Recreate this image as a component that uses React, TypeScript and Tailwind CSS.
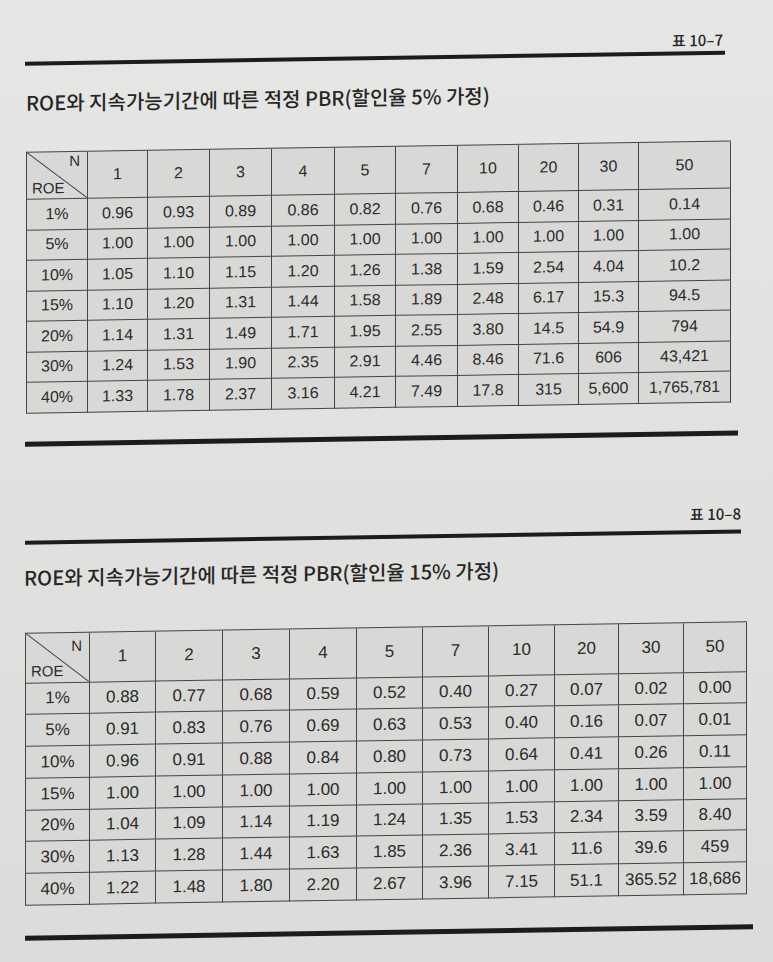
import React from 'react';

type TableSpec = {
  rows: [string, string[]][];
  gridClass: string;
  textClass: string;
  nClass: string;
  roeClass: string;
  marginClass: string;
};

const COLS = ['1', '2', '3', '4', '5', '7', '10', '20', '30', '50'];

// 표 10-7 : 할인율 5%
const TABLE_5: [string, string[]][] = [
  ['1%', ['0.96', '0.93', '0.89', '0.86', '0.82', '0.76', '0.68', '0.46', '0.31', '0.14']],
  ['5%', ['1.00', '1.00', '1.00', '1.00', '1.00', '1.00', '1.00', '1.00', '1.00', '1.00']],
  ['10%', ['1.05', '1.10', '1.15', '1.20', '1.26', '1.38', '1.59', '2.54', '4.04', '10.2']],
  ['15%', ['1.10', '1.20', '1.31', '1.44', '1.58', '1.89', '2.48', '6.17', '15.3', '94.5']],
  ['20%', ['1.14', '1.31', '1.49', '1.71', '1.95', '2.55', '3.80', '14.5', '54.9', '794']],
  ['30%', ['1.24', '1.53', '1.90', '2.35', '2.91', '4.46', '8.46', '71.6', '606', '43,421']],
  ['40%', ['1.33', '1.78', '2.37', '3.16', '4.21', '7.49', '17.8', '315', '5,600', '1,765,781']],
];

// 표 10-8 : 할인율 15%
const TABLE_15: [string, string[]][] = [
  ['1%', ['0.88', '0.77', '0.68', '0.59', '0.52', '0.40', '0.27', '0.07', '0.02', '0.00']],
  ['5%', ['0.91', '0.83', '0.76', '0.69', '0.63', '0.53', '0.40', '0.16', '0.07', '0.01']],
  ['10%', ['0.96', '0.91', '0.88', '0.84', '0.80', '0.73', '0.64', '0.41', '0.26', '0.11']],
  ['15%', ['1.00', '1.00', '1.00', '1.00', '1.00', '1.00', '1.00', '1.00', '1.00', '1.00']],
  ['20%', ['1.04', '1.09', '1.14', '1.19', '1.24', '1.35', '1.53', '2.34', '3.59', '8.40']],
  ['30%', ['1.13', '1.28', '1.44', '1.63', '1.85', '2.36', '3.41', '11.6', '39.6', '459']],
  ['40%', ['1.22', '1.48', '1.80', '2.20', '2.67', '3.96', '7.15', '51.1', '365.52', '18,686']],
];

const cell = 'flex items-center justify-center border-r border-b border-[#454545]';

function PbrTable({ rows, gridClass, textClass, nClass, roeClass, marginClass }: TableSpec) {
  return (
    <div
      className={`grid self-start border-l border-t border-[#454545] bg-[#d8d8d6] text-[#2b2b2b] font-['Liberation_Sans',Arial,sans-serif] ${gridClass} ${textClass} ${marginClass}`}
    >
      <div className="relative border-r border-b border-[#454545]">
        <svg className="absolute inset-0 w-full h-full" preserveAspectRatio="none" viewBox="0 0 100 100">
          <line x1="0" y1="0" x2="100" y2="100" stroke="#454545" strokeWidth="1" vectorEffect="non-scaling-stroke" />
        </svg>
        <span className={`absolute right-[7px] text-[15px] leading-4 ${nClass}`}>N</span>
        <span className={`absolute left-[5px] text-[15px] leading-4 ${roeClass}`}>ROE</span>
      </div>
      {COLS.map(c => (
        <div key={c} className={cell}>{c}</div>
      ))}
      {rows.map(([roe, vals]) => (
        <React.Fragment key={roe}>
          <div className={cell}>{roe}</div>
          {vals.map((v, i) => (
            <div key={i} className={cell}>{v}</div>
          ))}
        </React.Fragment>
      ))}
    </div>
  );
}

export default function App() {
  return (
    <div className="w-[773px] h-[962px] overflow-hidden bg-linear-to-b from-[#e6e6e4] to-[#dcdcda]">
      <div className="flex flex-col skew-y-[-0.9deg] font-['Noto_Sans_CJK_KR','Noto_Sans',sans-serif] text-[#262626]">
        <div className="pt-[35px] pr-[50px] h-[55px] flex justify-end text-[15px] leading-5 font-medium">표 10–7</div>
        <div className="mt-[1px] ml-[25px] w-[700px] h-[4px] bg-[#1c1c1c]" />
        <h2 className="mt-[23px] pl-[26px] h-[28px] text-[20px] leading-7 font-medium">
          ROE와 지속가능기간에 따른 적정 PBR(할인율 5% 가정)
        </h2>

        <PbrTable
          rows={TABLE_5}
          gridClass="grid-cols-[61px_60px_62px_62px_63px_61px_62px_61px_60px_60px_92px] grid-rows-[47px_repeat(7,30.5px)]"
          textClass="text-[16px]"
          nClass="top-[1px]"
          roeClass="bottom-[2px]"
          marginClass="mt-[35px] ml-[26px]"
        />

        <div className="mt-[28px] ml-[25px] w-[713px] h-[5px] bg-[#1c1c1c]" />
        <div className="mt-[68px] pr-[32px] h-[20px] flex justify-end text-[15px] leading-5 font-medium">표 10–8</div>
        <div className="mt-[6px] ml-[25px] w-[716px] h-[4px] bg-[#1c1c1c]" />
        <h2 className="mt-[19px] pl-[24px] h-[28px] text-[20px] leading-7 font-medium">
          ROE와 지속가능기간에 따른 적정 PBR(할인율 15% 가정)
        </h2>

        <PbrTable
          rows={TABLE_15}
          gridClass="grid-cols-[64px_66px_67px_67px_67px_66px_66px_66px_64px_65px_63px] grid-rows-[50px_repeat(7,31.8px)]"
          textClass="text-[17px]"
          nClass="top-[5px]"
          roeClass="bottom-[3px]"
          marginClass="mt-[41px] ml-[25px]"
        />

        <div className="mt-[30px] ml-[25px] w-[728px] h-[5px] bg-[#1c1c1c]" />
      </div>
    </div>
  );
}
